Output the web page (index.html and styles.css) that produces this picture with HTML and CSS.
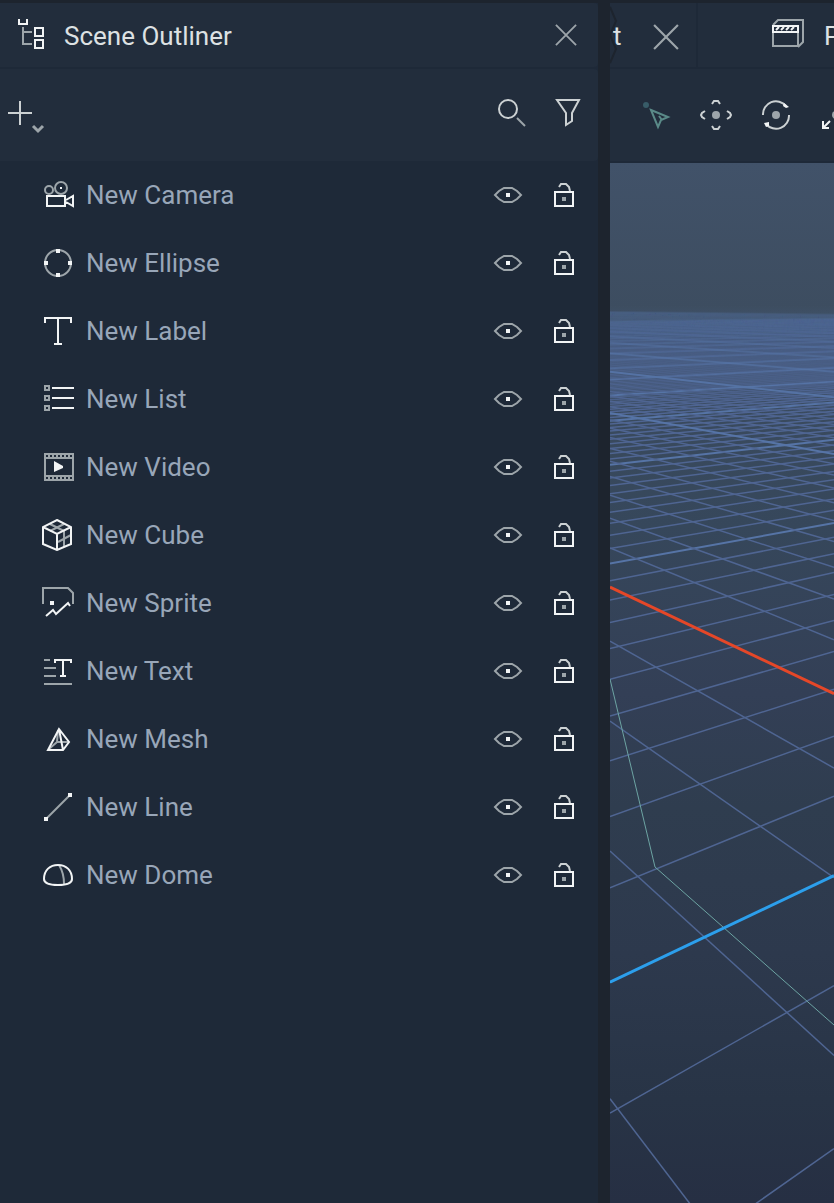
FILE: index.html
```html
<!DOCTYPE html>
<html lang="en">
<head>
<meta charset="utf-8">
<title>Scene Outliner</title>
<link rel="stylesheet" href="styles.css">
</head>
<body>
<svg class="defs" aria-hidden="true">
  <symbol id="close" viewBox="0 0 24 24"><path class="g" d="M1 1 23 23M23 1 1 23"/></symbol>
  <symbol id="eye" viewBox="0 0 32 32"><path class="g" d="M3 16l4-4 5-3h8l5 3 4 4-4 4-5 3h-8l-5-3z"/><path class="fw" d="M14 14h4v4h-4z"/></symbol>
  <symbol id="lock" viewBox="0 0 32 32"><path class="w" d="M7 13h18v14H7z"/><path class="fg" d="M14 18h4v4h-4z"/><path class="l" d="M11 8l2-3h5l3 3 1 4"/></symbol>
  <symbol id="camera" viewBox="0 0 32 32"><circle class="g" cx="7" cy="11" r="4"/><circle class="g" cx="19" cy="9" r="6"/><path class="fw" d="M18 8h2v2h-2z"/><path class="w" d="M5 17h18v10H5zM24 21l7-4v10l-7-4"/></symbol>
  <symbol id="ellipse" viewBox="0 0 32 32"><circle class="g" cx="16" cy="16" r="13"/><path class="fw" d="M14 2h4v4h-4zM26 14h4v4h-4zM14 26h4v4h-4zM2 14h4v4H2z"/></symbol>
  <symbol id="label" viewBox="0 0 32 32"><path class="w" d="M3 8V3h26v5M16 3v26M12 29h8"/></symbol>
  <symbol id="list" viewBox="0 0 32 32"><path class="g" d="M3 3h4v4H3zM3 13h4v4H3zM3 23h4v4H3z"/><path class="w" d="M10 5h22M10 15h22M10 25h22"/></symbol>
  <symbol id="video" viewBox="0 0 32 32"><path class="fg" fill-rule="evenodd" d="M2 2h30v28H2zM4 8v16h26V8zM4 4v2h2V4zM8 4v2h2V4zM12 4v2h2V4zM16 4v2h2V4zM20 4v2h2V4zM24 4v2h2V4zM28 4v2h2V4zM4 26v2h2v-2zM8 26v2h2v-2zM12 26v2h2v-2zM16 26v2h2v-2zM20 26v2h2v-2zM24 26v2h2v-2zM28 26v2h2v-2z"/><path class="fw" d="M12 10l9 5v2l-9 4z"/></symbol>
  <symbol id="cube" viewBox="0 0 32 32"><path class="g" d="M8 5l14 7M22 5 8 12M22 12v16M16 23l13-7"/><path class="w" d="M15 1l14 7v17l-14 6L1 25V8zM1 8l14 7 14-7M15 15v16"/></symbol>
  <symbol id="sprite" viewBox="0 0 32 32"><path class="g" d="M1 17V1h25l5 5v11"/><path class="fw" d="M8 14h4v4H8z"/><path class="w" d="M4 29l7-6 3 4 12-11 2 3"/></symbol>
  <symbol id="text" viewBox="0 0 32 32"><path class="g" d="M2 5h6M2 13h12M2 21h12M2 29h28"/><path class="w" d="M13 8V5h16v3M21 5v16M18 21h6"/></symbol>
  <symbol id="mesh" viewBox="0 0 32 32"><path class="g" d="M16 7l-1 12-8 7M15 19h12"/><path class="w" d="M17 6 6 27h15l6-8zM17 6l4 21"/></symbol>
  <symbol id="line" viewBox="0 0 32 32"><path class="g" d="M4 28 28 4"/><path class="fw" d="M26 2h4v4h-4zM2 26h4v4H2z"/></symbol>
  <symbol id="dome" viewBox="0 0 32 32"><path class="g" d="M17 6q5 8 5 19"/><path class="w" d="M2 20C2 11 8 6 16 6s14 5 14 14c0 4-6 6-14 6S2 24 2 20z"/></symbol>
</svg>

<main class="workspace">
  <section class="outliner">
    <header class="bar title-bar">
      <svg class="icon" viewBox="0 0 32 32"><path class="w" d="M3 0v5h8V0M19 9h8v8h-8zM19 21h8v8h-8z"/><path class="g" d="M7 8v17h9M7 13h9"/></svg>
      <h1>Scene Outliner</h1>
      <button class="plain close-small" aria-label="Close Scene Outliner"><svg><use href="#close"/></svg></button>
    </header>
    <div class="bar tool-bar">
      <button class="plain add" aria-label="Add object"><svg viewBox="0 0 40 36"><path class="l" d="M0 13h24M12 1v24"/><path class="chev" d="M25 26l5 5 5-5"/></svg></button>
      <button class="plain tool" aria-label="Search"><svg viewBox="0 0 32 32"><circle class="l" cx="12" cy="12" r="9"/><path class="g" d="M21 21l8 8"/></svg></button>
      <button class="plain tool" aria-label="Filter"><svg viewBox="0 0 32 32"><path class="l" d="M5 3h22l-7 13v8l-6 4V16z"/></svg></button>
    </div>
    <ul class="objects" id="objects"></ul>
  </section>

  <section class="stage">
    <div class="bar tabs">
      <div class="tab active">
        <svg class="notch" viewBox="0 0 8 64"><path d="M0 4 6 18 0 32 6 46 0 60"/></svg>
        <span>t</span>
        <button class="plain close-large" aria-label="Close tab"><svg><use href="#close"/></svg></button>
      </div>
      <div class="tab next">
        <svg class="icon" viewBox="0 0 32 32"><path class="g" d="M1 8v19h25V8M1 6l5-5h25v22l-5 5"/><path class="w" d="M1 7h25v6H1z"/><path class="stripe" d="M4 11 7 8M9 11l3-3M14 11l3-3M19 11l3-3"/></svg>
        <span>P</span>
      </div>
    </div>
    <div class="bar modes">
      <button class="plain mode" aria-label="Select"><svg viewBox="0 0 32 32"><circle class="sel-dot" cx="6" cy="6" r="3"/><path class="sel" d="M11 11l17 7-7 3-3 7zM19 17l3 4"/></svg></button>
      <button class="plain mode" aria-label="Move"><svg viewBox="0 0 32 32"><circle class="fg" cx="16" cy="16" r="4"/><path class="l" d="M12 5l2-3h4l2 3M12 27l2 3h4l2-3M5 12l-3 2-1 2 1 2 3 2M27 12l3 2 1 2-1 2-3 2"/></svg></button>
      <button class="plain mode" aria-label="Rotate"><svg viewBox="0 0 32 32"><circle class="fg" cx="16" cy="16" r="4"/><path class="l" d="M3 16A13 13 0 0 1 26 7M29 16A13 13 0 0 1 6 25"/><path class="fw" d="M24 4l5 4-3 1-3-2zM4 24l5-1v4l-3 1z"/></svg></button>
      <button class="plain mode" aria-label="Scale"><svg viewBox="0 0 32 32"><circle class="fg" cx="16" cy="16" r="4"/><path class="w" d="M3 22v7h6M3 29l7-7M29 10V3h-6M29 3l-7 7"/></svg></button>
    </div>
    <div class="viewport"><svg id="grid" viewBox="0 0 224 1040" preserveAspectRatio="xMinYMin slice" role="img" aria-label="Scene viewport"></svg></div>
  </section>
</main>
<script src="scene.js"></script>
</body>
</html>
```
FILE: styles.css
```css
* { box-sizing: border-box; }
body {
  margin: 0;
  background: #1d242e;
  color: #dde1e3;
  font: 26px/32px Roboto, "Liberation Sans", sans-serif;
}
.defs { position: absolute; width: 0; height: 0; }
.workspace {
  display: grid;
  grid-template-columns: minmax(0, 598fr) minmax(0, 224fr);
  column-gap: 12px;
  min-height: 100vh;
  padding-top: 3px;
}
.outliner, .stage { display: flex; flex-direction: column; min-width: 0; background: #1e2938; }
.stage { overflow: hidden; }
.bar { display: flex; align-items: center; background: #222d3c; flex: none; }
.outliner .bar { border-radius: 0 4px 4px 0; }
.title-bar, .tabs { height: 64px; margin-bottom: 2px; }
.title-bar { padding: 0 21px 0 16px; }
.title-bar h1 { flex: 1; margin: 0 0 0 16px; padding-top: 2px; font-size: 26px; font-weight: 400; }
.tool-bar, .modes { height: 92px; }
.tool-bar { padding: 0 14px 4px 8px; }
.plain { display: block; flex: none; padding: 0; border: 0; background: none; color: inherit; cursor: pointer; }
.plain svg { display: block; width: 100%; height: 100%; }
.icon { width: 32px; height: 32px; flex: none; }
.close-small { width: 22px; height: 22px; }
.close-large { width: 26px; height: 26px; }
.add { width: 40px; height: 36px; margin: 10px auto 0 0; }
.tool { width: 32px; height: 32px; margin-left: 24px; }

.objects { margin: 0; padding: 0; list-style: none; color: #98a6b8; }
.object { display: flex; align-items: center; height: 68px; padding: 0 18px 0 42px; }
.object .name { flex: 1; margin-left: 12px; }
.object .plain { width: 32px; height: 32px; }
.object .plain + .plain { margin-left: 24px; }

.tabs { white-space: nowrap; background: #1e2938; gap: 2px; overflow: hidden; }
.tab { position: relative; display: flex; align-items: center; flex: none; height: 64px; background: #222d3c; }
.active { width: 86px; padding: 4px 17px 0 3px; justify-content: space-between; }
.active span { margin-bottom: 2px; }
.notch { position: absolute; left: 0; top: 0; width: 8px; height: 64px; fill: none; stroke: #1d242e; stroke-width: 2; }
.next { flex: 1 0 auto; padding-left: 74px; }
.next span { margin-left: 20px; padding-top: 2px; }
.modes { padding-left: 30px; gap: 28px; margin-bottom: 2px; overflow: hidden; }
.mode { width: 32px; height: 32px; }
.viewport {
  position: relative;
  flex: 1;
  background: linear-gradient(#415269 0%, #3d4d60 14%, #36475b 35%, #333f56 51%, #2f3d4f 62%, #2d394d 76%, #283446 90%, #262f43 100%);
}
.viewport svg { position: absolute; inset: 0; width: 100%; height: 100%; }

.g, .w, .l { fill: none; stroke-width: 2; }
.g { stroke: #9da5aa; }
.w { stroke: #f2f4f5; }
.l { stroke: #ccd1d3; }
.fg { fill: #9da5aa; }
.fw { fill: #f2f4f5; }
.chev { fill: none; stroke: #9da5aa; stroke-width: 3; }
.stripe { fill: none; stroke: #f2f4f5; stroke-width: 2; }
.sel { fill: none; stroke: #5a8a88; stroke-width: 2; }
.sel-dot { fill: #385c68; }

.grid-line { stroke: #4f6592; stroke-width: 1.5; }
.grid-major { stroke: #5674a6; stroke-width: 2; }
.axis-x { stroke: #e54728; stroke-width: 3; }
.axis-z { stroke: #2c9fec; stroke-width: 3; }
.frustum { fill: none; stroke: #6da4a3; stroke-width: 1; }
```
FILE: scene.js
```js
const kinds = ["Camera", "Ellipse", "Label", "List", "Video", "Cube", "Sprite", "Text", "Mesh", "Line", "Dome"];
document.getElementById("objects").innerHTML = kinds.map(kind => `
  <li class="object">
    <svg class="icon" aria-hidden="true"><use href="#${kind.toLowerCase()}"/></svg>
    <span class="name">New ${kind}</span>
    <button class="plain" aria-label="Hide New ${kind}"><svg><use href="#eye"/></svg></button>
    <button class="plain" aria-label="Lock New ${kind}"><svg><use href="#lock"/></svg></button>
  </li>`).join("");

// Ground grid: every line is given by its inverse depth at the two view edges.
const horizon = 142;
const families = [
  { from: -1, axis: 1, cls: "axis-z", left: [0.0012376, 0.000239], right: [0.001469, 0.0002835] },
  { from: -4, axis: 0, cls: "axis-x", left: [0.003546, 0.0005715], right: [0.002573, 0.0004135] }
];
const project = ([base, step], n) => horizon + 1 / (base + step * n);
let lines = "";
let axes = "";
for (const family of families) {
  for (let n = family.from; n < 260; n++) {
    const y1 = project(family.left, n);
    const y2 = project(family.right, n);
    const depth = Math.min(y1, y2) - horizon;
    const major = (n - family.axis) % 10 === 0;
    const fade = major ? Math.min(1, depth / 70) : Math.min(1, (depth / 90) ** 2);
    if (n === family.axis) {
      axes += `<line class="${family.cls}" x1="0" y1="${y1}" x2="224" y2="${y2}"/>`;
    } else {
      lines += `<line class="${major ? "grid-major" : "grid-line"}" opacity="${fade.toFixed(3)}" x1="0" y1="${y1}" x2="224" y2="${y2}"/>`;
    }
  }
}
document.getElementById("grid").innerHTML = `
  <defs><linearGradient id="haze" x2="0" y2="1">
    <stop offset="0" stop-color="#5370a0" stop-opacity="0"/>
    <stop offset=".25" stop-color="#5370a0" stop-opacity=".25"/>
    <stop offset=".6" stop-color="#5370a0" stop-opacity=".25"/>
    <stop offset="1" stop-color="#5370a0" stop-opacity="0"/>
  </linearGradient></defs>
  <rect y="142" width="224" height="110" fill="url(#haze)"/>
  ${lines}
  <path class="frustum" d="M0 516 45 704 224 862"/>
  ${axes}`;
```
